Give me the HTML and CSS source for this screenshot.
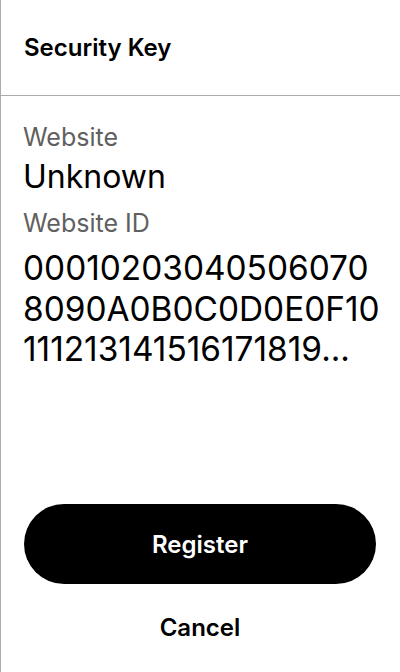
FILE: index.html
```html
<!DOCTYPE html>
<html>
<head>
<meta charset="utf-8">
<link rel="stylesheet" href="styles.css">
</head>
<body>
<div class="sheet">
  <header class="head">
    <h1 class="title">Security Key</h1>
  </header>
  <main class="content">
    <div class="label">Website</div>
    <div class="value">Unknown</div>
    <div class="label label-gap">Website ID</div>
    <div class="hex">
      <span class="hex-line">00010203040506070</span>
      <span class="hex-line">8090A0B0C0D0E0F10</span>
      <span class="hex-line">111213141516171819...</span>
    </div>
  </main>
  <footer class="actions">
    <button class="btn primary">Register</button>
    <button class="btn link">Cancel</button>
  </footer>
</div>
</body>
</html>
```

FILE: styles.css
```css
* { box-sizing: border-box; }
html, body { margin: 0; padding: 0; background: #fff; }
body { font-family: Inter, "Noto Sans", sans-serif; color: #000; }
.sheet {
  width: 400px;
  height: 672px;
  border-left: 1px solid #ababab;
  display: flex;
  flex-direction: column;
}
.head {
  height: 96px;
  border-bottom: 1px solid #ababab;
  display: flex;
  align-items: center;
  padding-left: 23px;
}
.title { margin: 0; font-size: 24px; font-weight: 600; line-height: 29px; }
.content { padding: 24px 22px 0; flex: 1; }
.label { font-size: 25px; color: #606060; line-height: 34px; }
.label-gap { margin-top: 6px; }
.value { font-size: 32px; line-height: 46px; }
.hex {
  margin-top: 8px;
  font-size: 33.4px;
  line-height: 40.5px;
  display: flex;
  flex-direction: column;
}
.hex-line { white-space: nowrap; }
.actions {
  display: flex;
  flex-direction: column;
  align-items: center;
  padding: 0 24px 16px 23px;
}
.btn { font-family: inherit; border: none; cursor: pointer; padding: 0; }
.primary {
  width: 100%;
  height: 80px;
  border-radius: 40px;
  background: #000;
  color: #fff;
  font-size: 24px;
  font-weight: 600;
}
.link {
  margin-top: 14px;
  height: 58px;
  padding: 0 24px;
  background: none;
  color: #000;
  font-size: 24px;
  font-weight: 600;
}
```
